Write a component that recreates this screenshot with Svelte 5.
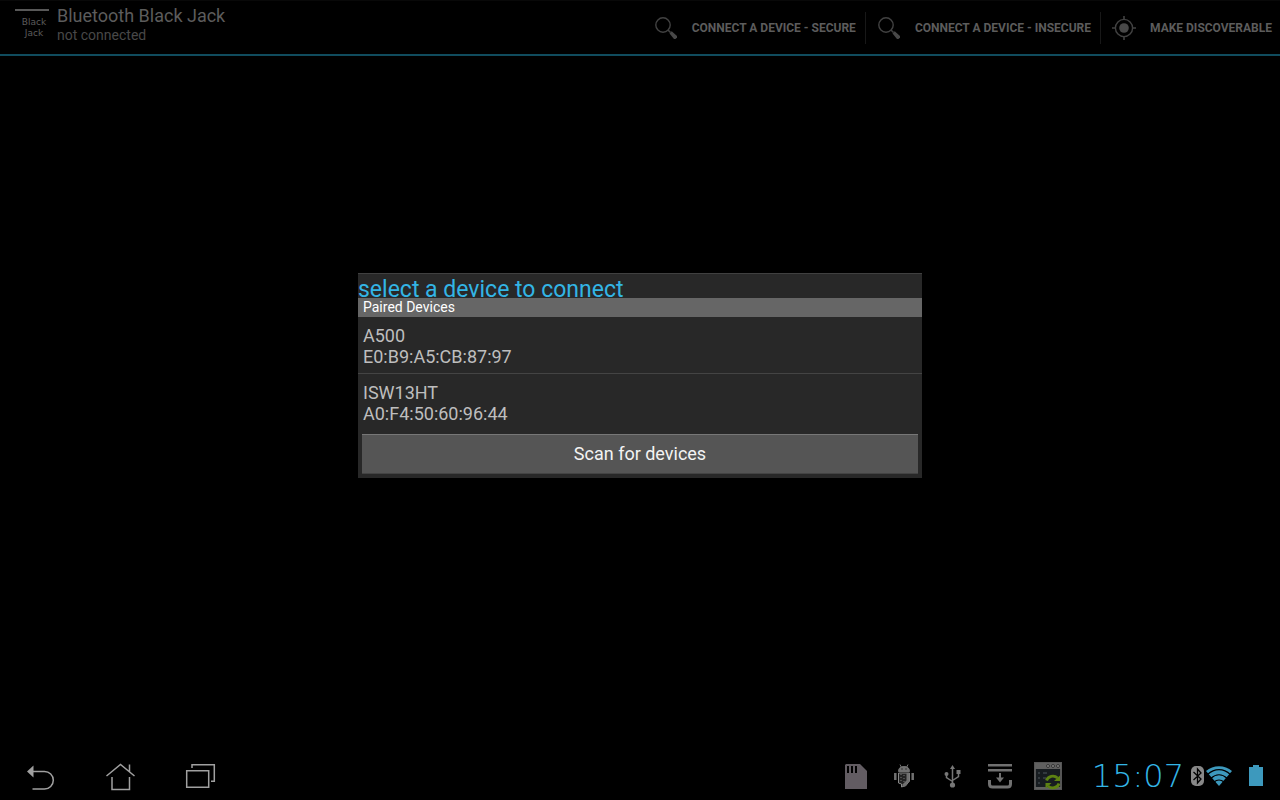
<script>
  let status = $state('not connected');
  let selected = $state('');
  let scanning = $state(false);

  const actions = [
    { label: 'Connect a device - Secure', icon: 'search' },
    { label: 'Connect a device - Insecure', icon: 'search' },
    { label: 'Make discoverable', icon: 'target' }
  ];

  const devices = [
    { name: 'A500', address: 'E0:B9:A5:CB:87:97' },
    { name: 'ISW13HT', address: 'A0:F4:50:60:96:44' }
  ];

  function connect(device) {
    selected = device.address;
    status = `connecting to ${device.name}`;
  }
</script>

<div class="screen">
  <header>
    <div class="logo"><span>Black</span><span>Jack</span></div>
    <div class="title">
      <h1>Bluetooth Black Jack</h1>
      <p>{status}</p>
    </div>
    <div class="actions">
      {#each actions as action}
        <button class="action">
          {#if action.icon === 'search'}
            <svg width="24" height="24" viewBox="0 0 24 24">
              <circle cx="9" cy="9" r="7.200" fill="none" stroke="#424242" stroke-width="1.400" />
              <path d="M14 14l2.500 2.500" stroke="#424242" stroke-width="1.600" />
              <path d="M15.500 17.500l2.200-2.200 5.300 4.700v1.500l-1.500 1.500H20z" fill="#484848" />
            </svg>
          {:else}
            <svg width="24" height="24" viewBox="0 0 24 24">
              <circle cx="12" cy="12" r="8.600" fill="none" stroke="#424242" stroke-width="1.400" />
              <circle cx="12" cy="12" r="4.800" fill="#484848" />
              <path d="M12 0v4M12 20v4M0 12h4M20 12h4" stroke="#424242" stroke-width="1.600" />
            </svg>
          {/if}
          <span>{action.label}</span>
        </button>
      {/each}
    </div>
  </header>

  <main>
    <section class="dialog" role="dialog" aria-labelledby="dialog-title">
      <h2 id="dialog-title">select a device to connect</h2>
      <h3>Paired Devices</h3>
      <ul>
        {#each devices as device}
          <li>
            <button class="device" class:selected={selected === device.address} onclick={() => connect(device)}>
              <span>{device.name}</span>
              <span>{device.address}</span>
            </button>
          </li>
        {/each}
      </ul>
      <div class="footer">
        <button class="scan" disabled={scanning} onclick={() => (scanning = true)}>Scan for devices</button>
      </div>
    </section>
  </main>

  <nav>
    <div class="keys">
      <button aria-label="Back">
        <svg width="32" height="32" viewBox="0 0 32 32">
          <path d="M9 11.500h11.500a8.800 8.800 0 0 1 0 17.600H8.500" fill="none" stroke="#a0a0a0" stroke-width="1.500" />
          <path d="M3 11.500l6.500-6v12z" fill="#a0a0a0" />
        </svg>
      </button>
      <button aria-label="Home">
        <svg width="32" height="32" viewBox="0 0 32 32" fill="none" stroke="#a0a0a0" stroke-width="1.500">
          <path d="M2.500 16L16.500 4.500 30.500 16M25.500 12V4.500M8 17v12.500h17.500V17" />
        </svg>
      </button>
      <button aria-label="Recent apps">
        <svg width="32" height="32" viewBox="0 0 32 32" fill="none" stroke="#a0a0a0" stroke-width="1.500">
          <path d="M2.700 10.700h22v16.500h-22zM8 8V4.700h22.300v16.500H27" />
        </svg>
      </button>
    </div>

    <div class="tray">
      <svg width="24" height="28" viewBox="0 0 24 28">
        <path d="M2 2h14l7 7v18H1V3z" fill="#625c62" />
        <path d="M4 4v7M8 4v7M12 4v7" stroke="#000" stroke-width="2" />
      </svg>
      <svg width="24" height="28" viewBox="0 0 24 28">
        <path d="M6.500 9.500c0-3.500 2-5 5.500-5s5.500 1.500 5.500 5zM8 2.500l1.500 3M16 2.500l-1.500 3" fill="#707070" stroke="#707070" stroke-width="1" />
        <path d="M3.300 11v7M20.700 11v7" stroke="#707070" stroke-width="2.500" />
        <path d="M6.500 11h11v8l-4 5h-1l-3 1v-3l-3-1z" fill="#222" stroke="#888" stroke-width="1" />
        <path d="M9 12v9M12 13v9" stroke="#777" stroke-width="1" stroke-dasharray="1 2" fill="none" />
        <path d="M16 11v8l-5 5" stroke="#707070" stroke-width="3" fill="none" />
        <path d="M9.500 7h1M13.500 7h1" stroke="#000" />
      </svg>
      <svg width="24" height="28" viewBox="0 0 24 28">
        <path d="M12.500 6v17M6.500 12v3.500l6 4M18.500 10v4.500l-6 4" fill="none" stroke="#777" stroke-width="1.500" />
        <path d="M12.500 3l2.500 4h-5z" fill="#777" />
        <circle cx="12.500" cy="23" r="2.600" fill="#777" />
        <circle cx="6.500" cy="12" r="2" fill="#777" />
        <path d="M16.500 8h4v4h-4z" fill="#777" />
      </svg>
      <svg width="24" height="28" viewBox="0 0 24 28">
        <path d="M0 3.200h24M0 8.200h24" stroke="#707070" stroke-width="2.500" />
        <path d="M1.500 18v4q0 3 3 3h15q3 0 3-3v-4" fill="none" stroke="#707070" stroke-width="3" />
        <path d="M12 11v6" stroke="#707070" stroke-width="2" />
        <path d="M8 15.500h8l-4 5z" fill="#707070" />
      </svg>
      <svg width="28" height="28" viewBox="0 0 28 28">
        <path d="M1 1h26v26H1z" fill="#171c20" stroke="#555" stroke-width="2" />
        <path d="M1 1h26v6H1zM1 25h26v2H1z" fill="#606060" />
        <g fill="#888" stroke="#333">
          <circle cx="14" cy="4" r="1.500" />
          <circle cx="19" cy="4" r="1.500" />
          <circle cx="24" cy="4" r="1.500" />
        </g>
        <path d="M4 11h2M4 16h2M4 21h2M9 11h4M9 16h3" stroke="#3c4348" stroke-width="1.500" />
        <path d="M12.500 18.500a6.500 6 0 0 1 11-2.500M25 21.500a6.500 6 0 0 1-11 2.500" fill="none" stroke="#5d8212" stroke-width="2.800" />
        <path d="M26 13.500v5.500h-6zM11.500 26.500V21h6z" fill="#5d8212" />
      </svg>
    </div>

    <time>15:07</time>

    <div class="radios">
      <svg width="13" height="24" viewBox="0 0 13 24">
        <rect y="2" width="13" height="20" rx="5" fill="#888" />
        <path d="M2.500 8l7.500 7-3.500 4V5L10 9l-7.500 7" fill="none" stroke="#000" stroke-width="1.300" />
      </svg>
      <svg width="26" height="24" viewBox="0 0 26 24">
        <path d="M0 7C7 .5 19 .5 26 7L13 22z" fill="#3d99bd" />
        <path d="M1.500 10.500c7-6.500 16-6.500 23 0M5 14.200c5-4.500 11-4.500 16 0M8 18c3-2.700 7-2.700 10 0" fill="none" stroke="#000" stroke-width="1.200" />
      </svg>
    </div>
    <svg class="battery" width="14" height="24" viewBox="0 0 14 24">
      <path d="M4 1h6v2h4v19H0V3h4z" fill="#3d99bd" />
    </svg>
  </nav>
</div>

<style>
  :global(body) {
    margin: 0;
    background: #000;
  }
  .screen {
    position: relative;
    display: flex;
    flex-direction: column;
    min-height: 100vh;
    font-family: Roboto, sans-serif;
    color: #5c5c5c;
  }
  h1, h2, h3, p, ul {
    margin: 0;
    padding: 0;
    font-weight: 400;
  }
  ul {
    list-style: none;
  }
  button {
    margin: 0;
    padding: 0;
    border: 0;
    background: none;
    color: inherit;
    font-family: inherit;
    cursor: pointer;
  }
  svg {
    display: block;
    flex: none;
  }

  header {
    display: flex;
    box-sizing: border-box;
    min-height: 56px;
    border-top: 1px solid #080808;
    border-bottom: 2px solid #104c5e;
  }
  .logo {
    display: flex;
    flex-direction: column;
    align-items: center;
    align-self: flex-start;
    box-sizing: border-box;
    width: 34px;
    margin: 8px 8px 0 15px;
    padding: 6px 0 0 4px;
    border-top: 2px solid #585858;
    font: 9px/11px 'DejaVu Sans', sans-serif;
  }
  .title {
    padding-top: 4px;
  }
  h1 {
    font-size: 18px;
    line-height: 22px;
  }
  .title p {
    font-size: 14px;
    line-height: 16px;
    color: #484848;
  }
  .actions {
    display: flex;
    align-items: center;
    margin-left: auto;
  }
  .action {
    display: flex;
    align-items: center;
    gap: 14px;
    height: 32px;
    padding: 0 9px 0 11px;
    border-left: 1px solid #181818;
    font-size: 12px;
    font-weight: 700;
    text-transform: uppercase;
  }
  .action:first-child {
    border-left: 0;
  }
  .action:last-child {
    padding-right: 8px;
  }

  /* the dialog floats over the whole screen above the system bar */
  main {
    position: absolute;
    inset: 0 0 50px;
    display: grid;
    place-items: center;
    pointer-events: none;
  }
  .dialog {
    box-sizing: border-box;
    width: min(564px, 100%);
    border-top: 1px solid #404040;
    background: #282828;
    pointer-events: auto;
  }
  h2 {
    height: 24px;
    color: #33b5e5;
    font-size: 23px;
    line-height: 32px;
  }
  h3 {
    padding: 0 5px;
    background: #666;
    color: #fff;
    font-size: 14px;
    line-height: 19px;
  }
  li + li {
    border-top: 1px solid #444;
  }
  .device {
    display: flex;
    flex-direction: column;
    width: 100%;
    padding: 8px 5px 6px;
    color: #bebebe;
    font-size: 18px;
    line-height: 21px;
    text-align: left;
  }
  .device.selected {
    background: #1b5a70;
  }
  .footer {
    padding: 4px;
  }
  .scan {
    width: 100%;
    height: 40px;
    border-top: 1px solid #777;
    border-bottom: 1px solid #444;
    background: #555;
    color: #f3f3f3;
    font-size: 18px;
  }

  nav {
    display: flex;
    align-items: center;
    height: 48px;
    margin-top: auto;
    padding-right: 17px;
  }
  .keys {
    display: flex;
    margin-right: auto;
  }
  .keys button {
    display: grid;
    place-items: center;
    width: 80px;
    height: 48px;
  }
  .tray {
    display: grid;
    grid-auto-flow: column;
    grid-auto-columns: 48px;
    place-items: center;
  }
  time {
    min-width: 112px;
    color: #33b5e5;
    font: 200 32px/48px 'DejaVu Sans', sans-serif;
    text-align: right;
  }
  .radios {
    display: flex;
    gap: 2px;
    margin: 0 17px 0 7px;
  }
</style>
